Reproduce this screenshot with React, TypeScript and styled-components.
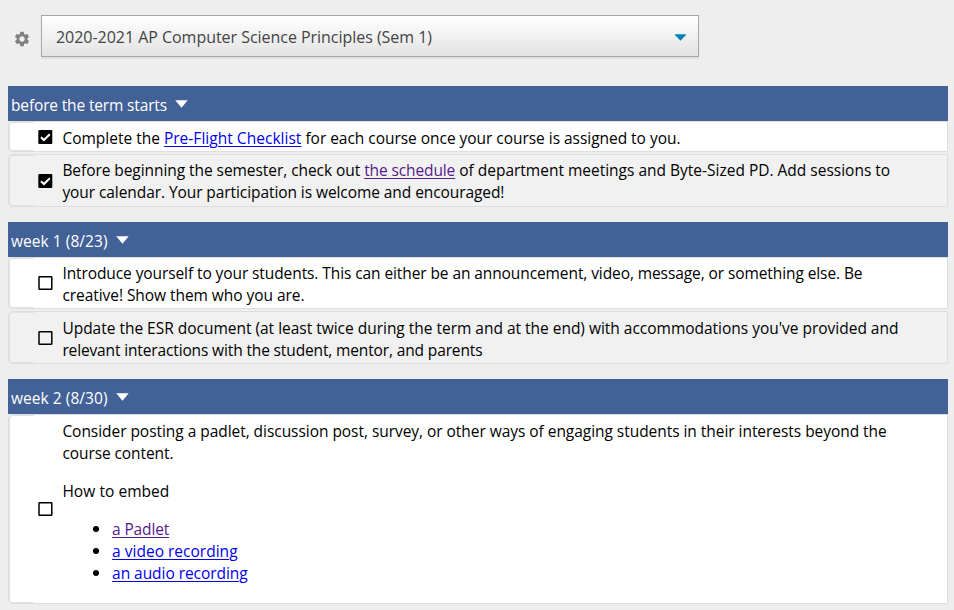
import React from 'react';
import styled, { createGlobalStyle } from 'styled-components';
import { MdSettings } from 'react-icons/md';

const Global = createGlobalStyle`
  * { box-sizing: border-box; }
  body {
    margin: 0;
    background: #eeeeee;
    overflow: hidden;
    font-family: "Open Sans", "Noto Sans", sans-serif;
  }
`;

const Page = styled.main`
  width: 954px;
  height: 610px;
  padding: 15px 6px 0 8px;
  overflow: hidden;
`;

const Toolbar = styled.header`
  display: flex;
  align-items: center;
  height: 42px;
  padding-left: 5px;
  margin-bottom: 29px;
`;

const GearIcon = styled(MdSettings)`
  width: 18px;
  height: 18px;
  margin: 6px 10px 0 0;
  flex: none;
  color: #808080;
`;

const CourseSelect = styled.button`
  display: flex;
  align-items: center;
  justify-content: space-between;
  width: 658px;
  height: 42px;
  padding: 2px 12px 0 14px;
  border: 1px solid #a6a6a6;
  background: linear-gradient(#ffffff, #e3e3e3);
  box-shadow: 0 2px 1px rgba(0, 0, 0, 0.05);
  color: #444444;
  font: 16px/22px "Open Sans", "Noto Sans", sans-serif;
`;

const Arrow = styled.svg<{ $w: number; $h: number }>`
  width: ${(p) => p.$w}px;
  height: ${(p) => p.$h}px;
  flex: none;
`;

const Section = styled.section`
  width: 940px;
  margin-bottom: 15px;
`;

const SectionHeader = styled.h2<{ $top?: number }>`
  display: flex;
  align-items: center;
  gap: 8px;
  height: 35px;
  margin: 0;
  padding: ${(p) => p.$top ?? 3}px 0 0 3px;
  background: #426196;
  color: #ffffff;
  font-size: 15.5px;
  line-height: 22px;
  font-weight: 400;

  svg {
    margin-bottom: 2px;
  }
`;

const Tasks = styled.ul`
  display: flex;
  flex-direction: column;
  gap: 2px;
  margin: 0;
  padding: 0;
  list-style: none;
`;

const Task = styled.li<{ $height: number; $shaded?: boolean }>`
  display: flex;
  height: ${(p) => p.$height}px;
  border: 1px solid #dedede;
  border-radius: 5px 0 0 5px;
  background: ${(p) => (p.$shaded ? '#f1f1f1' : '#ffffff')};
`;

const Handle = styled.div`
  width: 25px;
  flex: none;
  border: 1px solid #e2e2e2;
  border-right: 0;
  border-radius: 4px 0 0 4px;
`;

const CheckCell = styled.div`
  display: flex;
  align-items: center;
  width: 28.4px;
  padding-left: 4px;
  flex: none;
`;

const TaskBody = styled.div<{ $top: number }>`
  flex: 1;
  padding-top: ${(p) => p.$top}px;
  color: #000000;
  font-size: 15.5px;
  line-height: 22px;
`;

const Paragraph = styled.p`
  margin: 0 0 16px;
`;

const Line = styled.span`
  display: block;
  white-space: pre;
`;

const Text = styled.span<{ $track: number }>`
  white-space: pre;
  letter-spacing: ${(p) => p.$track}px;
`;

const Link = styled.a<{ $track: number; $visited?: boolean }>`
  color: ${(p) => (p.$visited ? '#551a8b' : '#0000ee')};
  letter-spacing: ${(p) => p.$track}px;
  text-decoration: underline;
  text-decoration-thickness: 1px;
  text-underline-offset: 2px;
`;

const EmbedList = styled.ul`
  margin: 0;
  padding: 0 0 0 31px;
  list-style: none;
`;

const EmbedItem = styled.li`
  display: flex;
  align-items: center;
  gap: 12.7px;
  height: 22px;

  &::before {
    content: '';
    width: 6px;
    height: 6px;
    border-radius: 50%;
    background: #000000;
  }
`;

const Checkbox = ({ checked }: { checked?: boolean }) => (
  <svg width="15" height="14" viewBox="0 0 15 14" role="checkbox" aria-checked={!!checked}>
    {checked ? (
      <>
        <rect x="0.3" y="0" width="14" height="14" rx="1" fill="#000" />
        <path d="M3 7.200 5.900 10 11.800 4.200" fill="none" stroke="#fff" strokeWidth="2" />
      </>
    ) : (
      <rect x="1" y="0.75" width="12.800" height="12.500" rx="0.6" fill="none" stroke="#000" strokeWidth="1.5" />
    )}
  </svg>
);

const SectionArrow = () => (
  <Arrow $w={13} $h={8} viewBox="0 0 13 8">
    <path d="M0.2 0.3h12.500L6.500 7.700z" fill="#fff" />
  </Arrow>
);

interface TaskRowProps {
  height: number;
  top?: number;
  checked?: boolean;
  shaded?: boolean;
  children: React.ReactNode;
}

const TaskRow = ({ height, top = 4, checked, shaded, children }: TaskRowProps) => (
  <Task $height={height} $shaded={shaded}>
    <Handle />
    <CheckCell>
      <Checkbox checked={checked} />
    </CheckCell>
    <TaskBody $top={top}>{children}</TaskBody>
  </Task>
);

export default function App() {
  return (
    <Page>
      <Global />
      <Toolbar>
        <GearIcon />
        <CourseSelect>
          <Text $track={-0.033}>2020-2021 AP Computer Science Principles (Sem 1)</Text>
          <Arrow $w={11} $h={7} viewBox="0 0 11 7">
            <path d="M0.3 0.2h10.400v1L5.500 6.700.3 1.200z" fill="#0082b8" />
          </Arrow>
        </CourseSelect>
      </Toolbar>

      <Section>
        <SectionHeader>
          <Text $track={-0.15}>before the term starts</Text>
          <SectionArrow />
        </SectionHeader>
        <Tasks>
          <TaskRow height={31} top={5} checked>
            <Line>
              <Text $track={-0.004}>Complete the </Text>
              <Link $track={0.029}>Pre-Flight Checklist</Link>
              <Text $track={-0.035}> for each course once your course is assigned to you.</Text>
            </Line>
          </TaskRow>
          <TaskRow height={53} checked shaded>
            <Line>
              <Text $track={-0.060}>Before beginning the semester, check out </Text>
              <Link $track={-0.116} $visited>the schedule</Link>
              <Text $track={-0.004}> of department meetings and Byte-Sized PD. Add sessions to</Text>
            </Line>
            <Line>
              <Text $track={-0.077}>your calendar. Your participation is welcome and encouraged!</Text>
            </Line>
          </TaskRow>
        </Tasks>
      </Section>

      <Section>
        <SectionHeader $top={2}>
          <Text $track={0.047}>week 1 (8/23)</Text>
          <SectionArrow />
        </SectionHeader>
        <Tasks>
          <TaskRow height={52}>
            <Line>
              <Text $track={-0.092}>
                Introduce yourself to your students. This can either be an announcement, video, message, or something else. Be
              </Text>
            </Line>
            <Line>
              <Text $track={-0.055}>creative! Show them who you are.</Text>
            </Line>
          </TaskRow>
          <TaskRow height={53} top={5} shaded>
            <Line>
              <Text $track={-0.016}>
                Update the ESR document (at least twice during the term and at the end) with accommodations you've provided and
              </Text>
            </Line>
            <Line>
              <Text $track={-0.138}>relevant interactions with the student, mentor, and parents</Text>
            </Line>
          </TaskRow>
        </Tasks>
      </Section>

      <Section>
        <SectionHeader>
          <Text $track={0.047}>week 2 (8/30)</Text>
          <SectionArrow />
        </SectionHeader>
        <Tasks>
          <TaskRow height={190} top={5}>
            <Paragraph>
              <Line>
                <Text $track={-0.044}>
                  Consider posting a padlet, discussion post, survey, or other ways of engaging students in their interests beyond the
                </Text>
              </Line>
              <Line>
                <Text $track={-0.086}>course content.</Text>
              </Line>
            </Paragraph>
            <Paragraph>
              <Text $track={0.051}>How to embed</Text>
            </Paragraph>
            <EmbedList>
              <EmbedItem>
                <Link $track={-0.15} $visited>a Padlet</Link>
              </EmbedItem>
              <EmbedItem>
                <Link $track={0.013}>a video recording</Link>
              </EmbedItem>
              <EmbedItem>
                <Link $track={-0.050}>an audio recording</Link>
              </EmbedItem>
            </EmbedList>
          </TaskRow>
        </Tasks>
      </Section>
    </Page>
  );
}
